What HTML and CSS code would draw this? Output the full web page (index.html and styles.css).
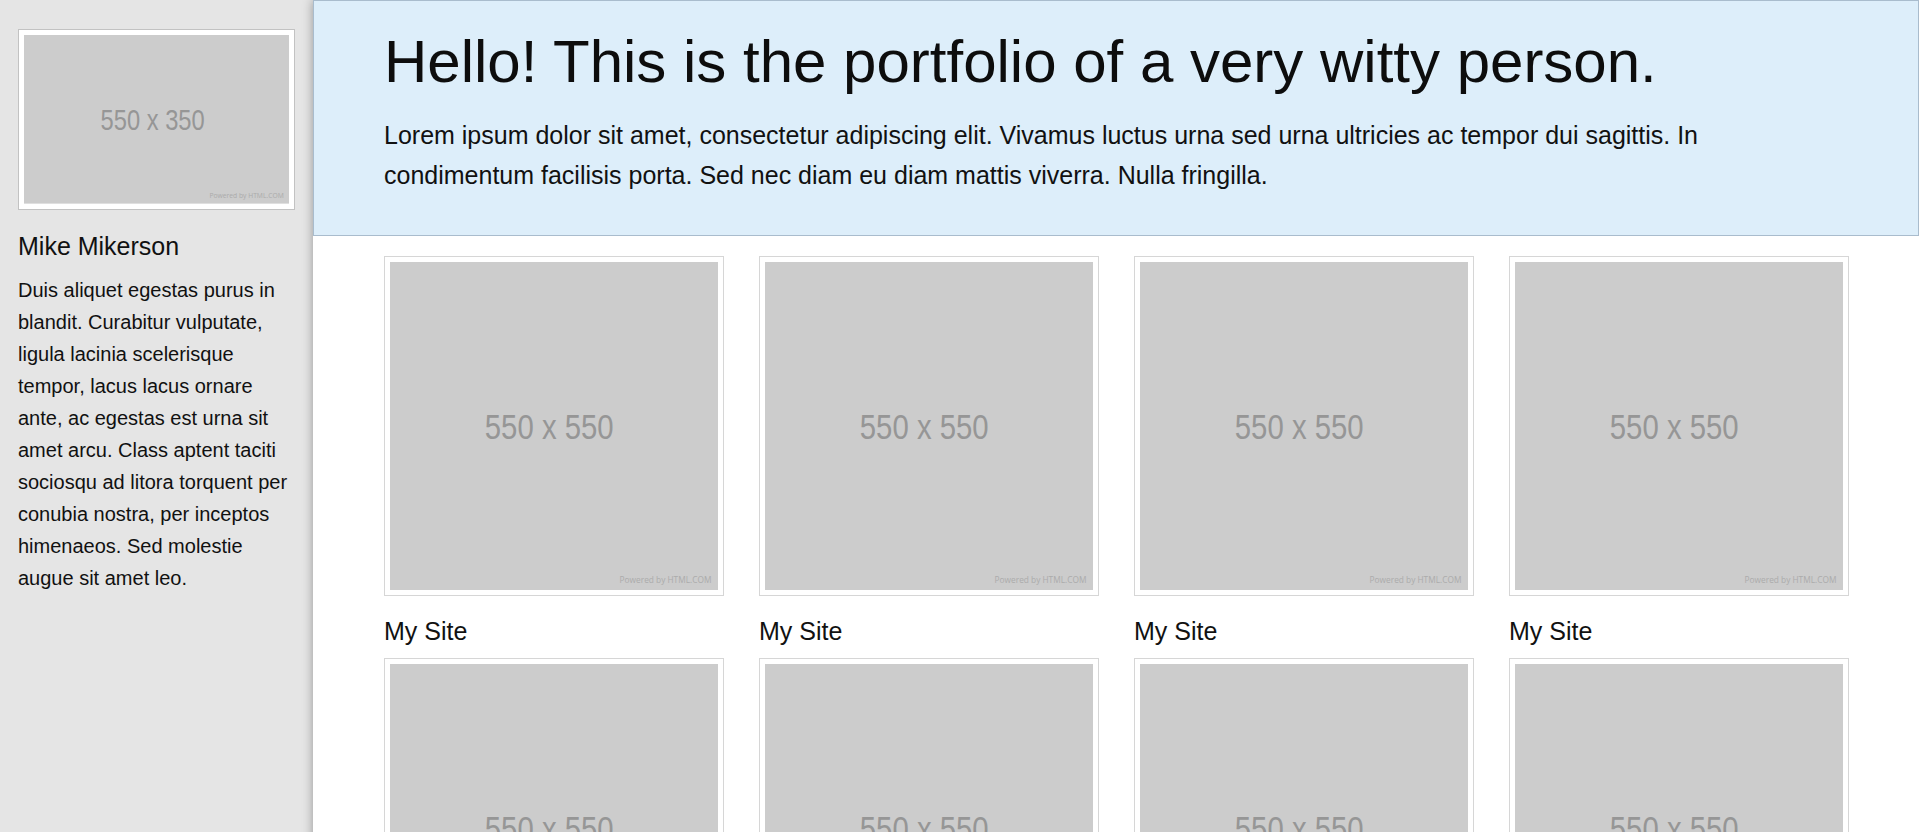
FILE: index.html
```html
<!DOCTYPE html>
<html lang="en">
<head>
<meta charset="utf-8">
<title>Portfolio</title>
<link rel="stylesheet" href="styles.css">
</head>
<body>
<div class="layout">
  <aside class="sidebar">
    <div class="frame frame-side">
      <svg class="ph" viewBox="0 0 550 350" aria-label="550 x 350 placeholder">
        <rect width="550" height="350" class="ph-bg"/>
        <text x="267" y="197" text-anchor="middle" textLength="216" lengthAdjust="spacingAndGlyphs" class="ph-main">550 x 350</text>
        <text x="539" y="339" text-anchor="end" textLength="154" lengthAdjust="spacingAndGlyphs" class="ph-credit">Powered by HTML.COM</text>
      </svg>
    </div>
    <h2 class="name">Mike Mikerson</h2>
    <p class="bio">Duis aliquet egestas purus in blandit. Curabitur vulputate, ligula lacinia scelerisque tempor, lacus lacus ornare ante, ac egestas est urna sit amet arcu. Class aptent taciti sociosqu ad litora torquent per conubia nostra, per inceptos himenaeos. Sed molestie augue sit amet leo.</p>
  </aside>
  <main class="main">
    <header class="hero">
      <h1>Hello! This is the portfolio of a very witty person.</h1>
      <p>Lorem ipsum dolor sit amet, consectetur adipiscing elit. Vivamus luctus urna sed urna ultricies ac tempor dui sagittis. In condimentum facilisis porta. Sed nec diam eu diam mattis viverra. Nulla fringilla.</p>
    </header>
    <section class="grid">
      <figure class="card"><div class="frame"><svg class="ph" viewBox="0 0 550 550"><rect width="550" height="550" class="ph-bg"/><text x="267" y="297" text-anchor="middle" textLength="216" lengthAdjust="spacingAndGlyphs" class="ph-main">550 x 550</text><text x="539" y="538" text-anchor="end" textLength="154" lengthAdjust="spacingAndGlyphs" class="ph-credit">Powered by HTML.COM</text></svg></div><figcaption>My Site</figcaption></figure>
      <figure class="card"><div class="frame"><svg class="ph" viewBox="0 0 550 550"><rect width="550" height="550" class="ph-bg"/><text x="267" y="297" text-anchor="middle" textLength="216" lengthAdjust="spacingAndGlyphs" class="ph-main">550 x 550</text><text x="539" y="538" text-anchor="end" textLength="154" lengthAdjust="spacingAndGlyphs" class="ph-credit">Powered by HTML.COM</text></svg></div><figcaption>My Site</figcaption></figure>
      <figure class="card"><div class="frame"><svg class="ph" viewBox="0 0 550 550"><rect width="550" height="550" class="ph-bg"/><text x="267" y="297" text-anchor="middle" textLength="216" lengthAdjust="spacingAndGlyphs" class="ph-main">550 x 550</text><text x="539" y="538" text-anchor="end" textLength="154" lengthAdjust="spacingAndGlyphs" class="ph-credit">Powered by HTML.COM</text></svg></div><figcaption>My Site</figcaption></figure>
      <figure class="card"><div class="frame"><svg class="ph" viewBox="0 0 550 550"><rect width="550" height="550" class="ph-bg"/><text x="267" y="297" text-anchor="middle" textLength="216" lengthAdjust="spacingAndGlyphs" class="ph-main">550 x 550</text><text x="539" y="538" text-anchor="end" textLength="154" lengthAdjust="spacingAndGlyphs" class="ph-credit">Powered by HTML.COM</text></svg></div><figcaption>My Site</figcaption></figure>
      <figure class="card"><div class="frame"><svg class="ph" viewBox="0 0 550 550"><rect width="550" height="550" class="ph-bg"/><text x="267" y="297" text-anchor="middle" textLength="216" lengthAdjust="spacingAndGlyphs" class="ph-main">550 x 550</text><text x="539" y="538" text-anchor="end" textLength="154" lengthAdjust="spacingAndGlyphs" class="ph-credit">Powered by HTML.COM</text></svg></div><figcaption>My Site</figcaption></figure>
      <figure class="card"><div class="frame"><svg class="ph" viewBox="0 0 550 550"><rect width="550" height="550" class="ph-bg"/><text x="267" y="297" text-anchor="middle" textLength="216" lengthAdjust="spacingAndGlyphs" class="ph-main">550 x 550</text><text x="539" y="538" text-anchor="end" textLength="154" lengthAdjust="spacingAndGlyphs" class="ph-credit">Powered by HTML.COM</text></svg></div><figcaption>My Site</figcaption></figure>
      <figure class="card"><div class="frame"><svg class="ph" viewBox="0 0 550 550"><rect width="550" height="550" class="ph-bg"/><text x="267" y="297" text-anchor="middle" textLength="216" lengthAdjust="spacingAndGlyphs" class="ph-main">550 x 550</text><text x="539" y="538" text-anchor="end" textLength="154" lengthAdjust="spacingAndGlyphs" class="ph-credit">Powered by HTML.COM</text></svg></div><figcaption>My Site</figcaption></figure>
      <figure class="card"><div class="frame"><svg class="ph" viewBox="0 0 550 550"><rect width="550" height="550" class="ph-bg"/><text x="267" y="297" text-anchor="middle" textLength="216" lengthAdjust="spacingAndGlyphs" class="ph-main">550 x 550</text><text x="539" y="538" text-anchor="end" textLength="154" lengthAdjust="spacingAndGlyphs" class="ph-credit">Powered by HTML.COM</text></svg></div><figcaption>My Site</figcaption></figure>
    </section>
  </main>
</div>
</body>
</html>
```

FILE: styles.css
```css
html, body {
  margin: 0;
  padding: 0;
}

body {
  font-family: "Liberation Sans", Arial, sans-serif;
  color: #111111;
  background: #ffffff;
}

.layout {
  display: flex;
  align-items: stretch;
  min-height: 100vh;
}

/* Sidebar */
.sidebar {
  flex: none;
  width: 313px;
  box-sizing: border-box;
  padding: 29px 18px;
  background: #e5e5e5;
}

.frame {
  border: 1px solid #d6d6d6;
  background: #ffffff;
  padding: 5px;
}

.frame-side {
  border-color: #c2c2c2;
}

.ph {
  display: block;
  width: 100%;
  height: auto;
}

.ph-bg {
  fill: #cccccc;
}

.ph-main {
  font-family: "Liberation Sans", Arial, sans-serif;
  font-size: 60px;
  fill: #969696;
}

.ph-credit {
  font-family: "Open Sans", "Liberation Sans", sans-serif;
  font-size: 14px;
  fill: #ababab;
}

.name {
  font-size: 25px;
  font-weight: normal;
  line-height: 40px;
  margin: 16px 0 8px;
}

.bio {
  font-size: 20px;
  line-height: 32px;
  margin: 0;
}

/* Main */
.main {
  flex: 1;
  min-width: 0;
  background: #ffffff;
  box-shadow: 0 0 10px rgba(0, 0, 0, 0.35);
  padding-bottom: 40px;
}

.hero {
  margin-right: 1px;
  border: 1px solid #a9bccd;
  background: #ddeefa;
  padding: 26px 70px 40px;
}

.hero h1 {
  font-size: 60px;
  font-weight: normal;
  line-height: 69px;
  margin: 0 0 19px;
  color: #0d0d0d;
}

.hero p {
  font-size: 25px;
  line-height: 40px;
  margin: 0;
}

.grid {
  display: grid;
  grid-template-columns: repeat(4, 1fr);
  column-gap: 35px;
  row-gap: 7px;
  padding: 20px 71px 0 71px;
}

.card {
  margin: 0;
}

.card figcaption {
  font-size: 25px;
  line-height: 40px;
  margin-top: 15px;
}
```
